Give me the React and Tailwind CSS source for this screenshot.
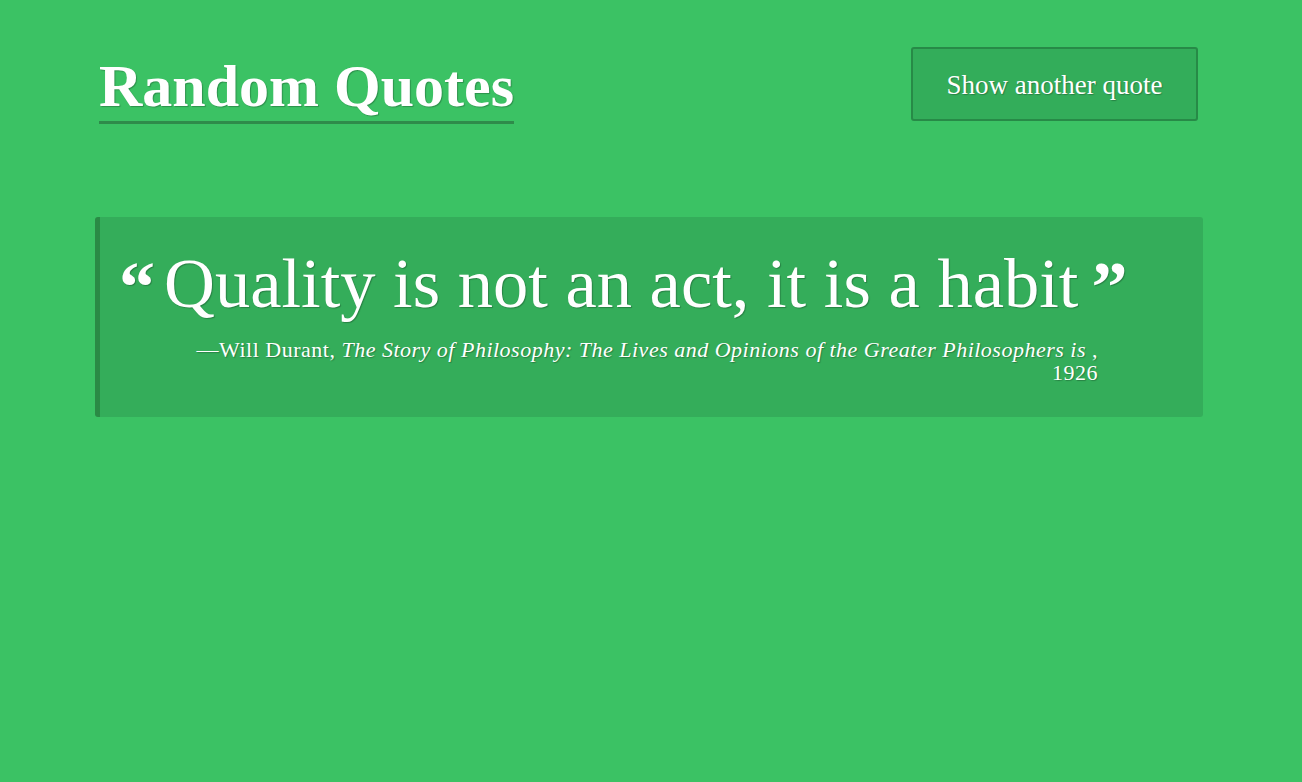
import React from 'react';

const shadow = '[text-shadow:1px_1px_1px_rgba(0,0,0,0.25)]';

export default function App() {
  const quote = {
    text: 'Quality is not an act, it is a habit',
    author: 'Will Durant',
    source: 'The Story of Philosophy: The Lives and Opinions of the Greater Philosophers is',
    year: '1926',
  };

  return (
    <div className="min-h-screen bg-[#3bc264] font-['Liberation_Serif',serif] text-white">
      <div className="pl-[95px] pr-[99px] pt-[47px]">
        {/* Header */}
        <header className="flex justify-between items-start">
          <h1 className={`ml-[4px] mt-[9px] pb-[5px] border-b-[3px] border-[#2e8b4a] text-[60px] font-bold leading-none ${shadow}`}>
            Random Quotes
          </h1>
          <button className={`mr-[5px] w-[287px] h-[74px] flex items-center justify-center pt-[2px] bg-[#33ad5a] border-2 border-[#278a47] rounded-[3px] text-[27px] ${shadow}`}>
            Show another quote
          </button>
        </header>

        {/* Quote card */}
        <blockquote className="mt-[93px] bg-[#34ad5a] border-l-[5px] border-[#2a8a45] rounded-[3px] pt-[31px] pb-[33px]">
          <div className="flex items-start pl-[19px]">
            <span className={`mt-[19px] mr-[9px] text-[72px] font-bold leading-[40px] ${shadow}`}>“</span>
            <span className={`text-[70.5px] leading-none ${shadow}`}>{quote.text}</span>
            <span className={`mt-[19px] ml-[13px] text-[72px] font-bold leading-[40px] ${shadow}`}>”</span>
          </div>
          <footer className={`mt-[19px] pr-[105px] text-right text-[22px] tracking-[0.5px] leading-[23px] ${shadow}`}>
            —{quote.author}, <cite className="italic">{quote.source}</cite> ,
            <br />
            {quote.year}
          </footer>
        </blockquote>
      </div>
    </div>
  );
}
